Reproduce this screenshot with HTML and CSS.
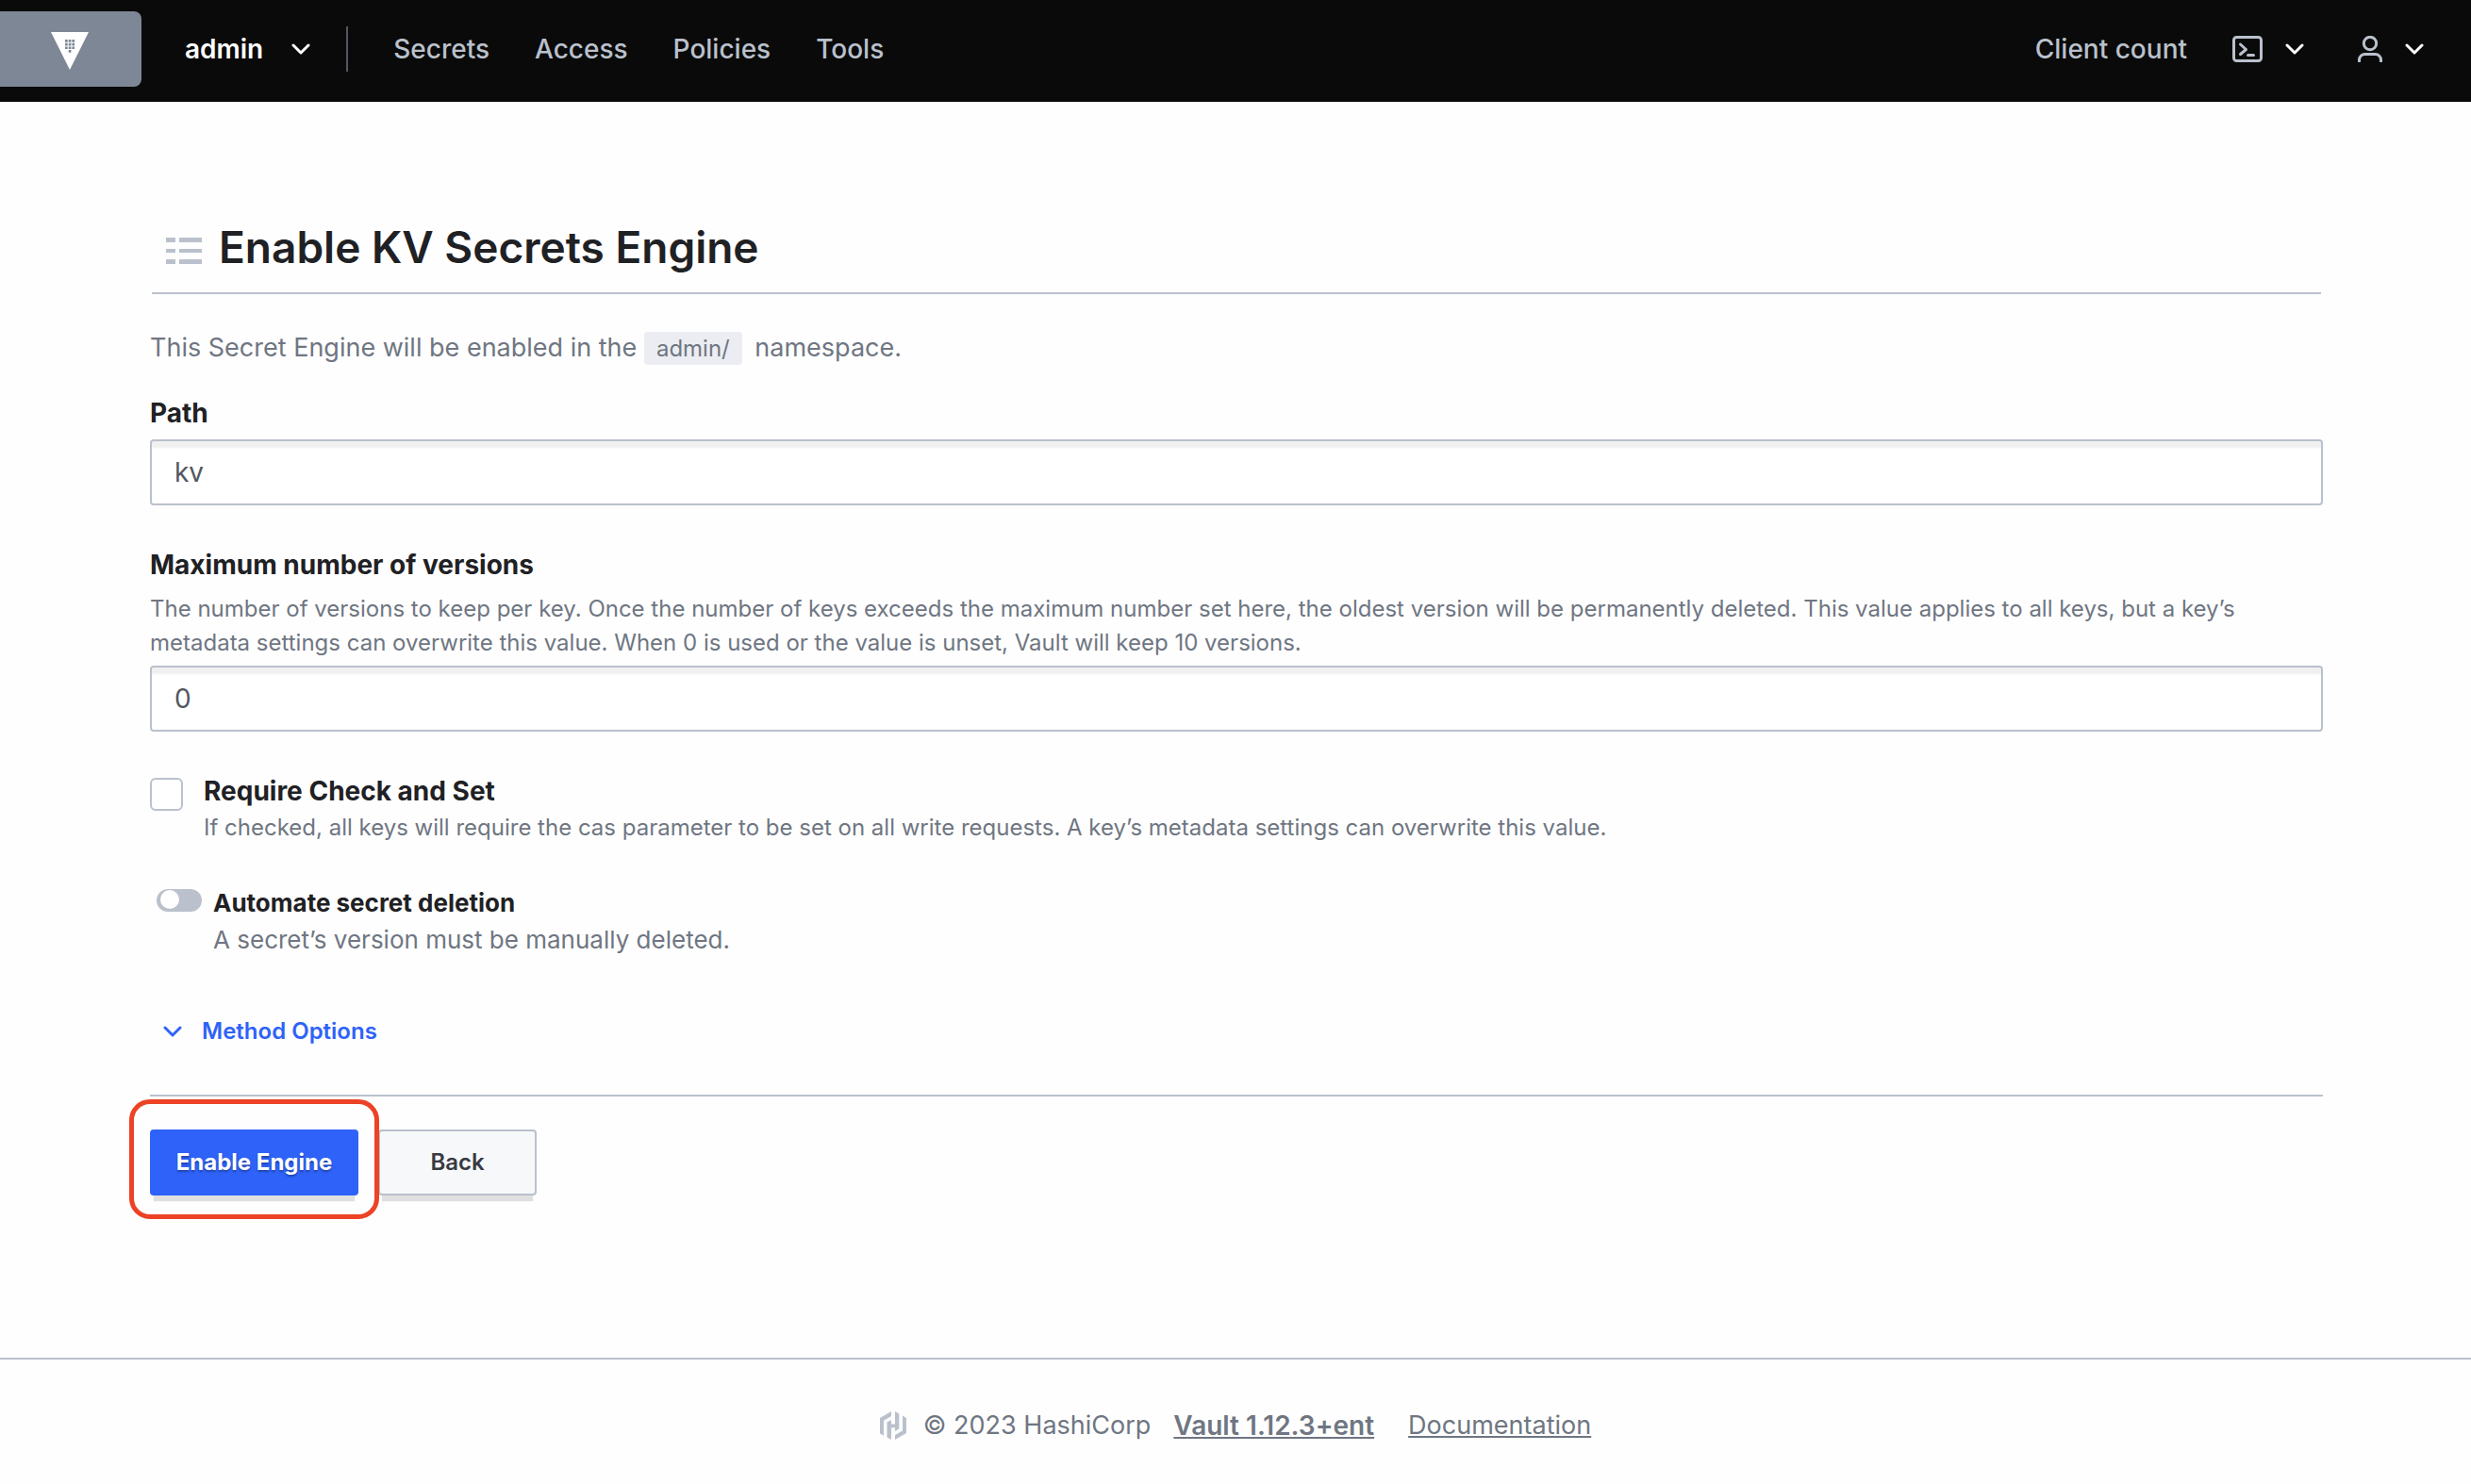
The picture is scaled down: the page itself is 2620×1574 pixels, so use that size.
FILE: index.html
```html
<!DOCTYPE html>
<html lang="en">
<head>
<meta charset="utf-8">
<meta name="viewport" content="width=device-width, initial-scale=1">
<title>Vault</title>
<link rel="stylesheet" href="styles.css">
</head>
<body>
<header class="topbar">
  <a class="brand" href="#" aria-label="Vault home">
    <svg width="40" height="40" viewBox="0 0 40 40"><path fill="#fff" d="M0 0h40L20 40z"/><path fill="#7e8795" d="M15 8h2.700v2.700H15zm3.700 0h2.700v2.700h-2.700zm3.700 0h2.700v2.700h-2.700zM15 11.700h2.700v2.700H15zm3.700 0h2.700v2.700h-2.700zm3.700 0h2.700v2.700h-2.700zM15 15.400h2.700v2.700H15zm3.700 0h2.700v2.700h-2.700zm3.700 0h2.700v2.700h-2.700zM18.700 19h2.700v2.700h-2.700z"/></svg>
  </a>
  <button class="namespace" type="button">admin
    <svg class="chevron" width="20" height="12" viewBox="0 0 20 12"><path d="M2 2l8 8 8-8"/></svg>
  </button>
  <nav class="links">
    <a href="#">Secrets</a>
    <a href="#">Access</a>
    <a href="#">Policies</a>
    <a href="#">Tools</a>
  </nav>
  <div class="tools">
    <a href="#">Client count</a>
    <button class="icon-button" type="button" aria-label="Console">
      <svg class="glyph" width="32" height="28" viewBox="0 0 32 28"><rect x="1.5" y="1.5" width="29" height="25" rx="3"/><path d="M8.500 9l6 5.500-6 5M16.500 20.500h6"/></svg>
      <svg class="chevron" width="20" height="12" viewBox="0 0 20 12"><path d="M2 2l8 8 8-8"/></svg>
    </button>
    <button class="icon-button" type="button" aria-label="User menu">
      <svg class="glyph" width="26" height="28" viewBox="0 0 26 28"><circle cx="13" cy="8" r="6.700"/><path d="M1.500 27v-1.500a6 6 0 0 1 6-6h11a6 6 0 0 1 6 6V27"/></svg>
      <svg class="chevron" width="20" height="12" viewBox="0 0 20 12"><path d="M2 2l8 8 8-8"/></svg>
    </button>
  </div>
</header>

<main class="page">
  <div class="title">
    <svg width="38" height="28" viewBox="0 0 38 28"><path fill="#bac1cc" d="M0 0h10v5H0zM14 0h24v5H14zM0 12h10v4H0zM14 12h24v4H14zM0 23h10v5H0zM14 23h24v5H14z"/></svg>
    <h1>Enable KV Secrets Engine</h1>
  </div>
  <form>
    <p class="intro">This Secret Engine will be enabled in the <code>admin/</code> namespace.</p>

    <div class="field">
      <label class="label" for="path">Path</label>
      <input class="input" id="path" type="text" value="kv">
    </div>

    <div class="field">
      <label class="label" for="versions">Maximum number of versions</label>
      <p class="help">The number of versions to keep per key. Once the number of keys exceeds the maximum number set here, the oldest version will be permanently deleted. This value applies to all keys, but a key’s metadata settings can overwrite this value. When 0 is used or the value is unset, Vault will keep 10 versions.</p>
      <input class="input" id="versions" type="text" value="0">
    </div>

    <div class="option">
      <input class="checkbox" id="cas" type="checkbox">
      <div>
        <label class="label" for="cas">Require Check and Set</label>
        <p class="help">If checked, all keys will require the cas parameter to be set on all write requests. A key’s metadata settings can overwrite this value.</p>
      </div>
    </div>

    <div class="option toggle-option">
      <input class="toggle" id="automate" type="checkbox" role="switch">
      <div>
        <label class="label small" for="automate">Automate secret deletion</label>
        <p class="help large">A secret’s version must be manually deleted.</p>
      </div>
    </div>

    <button class="more" type="button">
      <svg class="chevron" width="20" height="12" viewBox="0 0 20 12"><path d="M2 2l8 8 8-8"/></svg>
      Method Options
    </button>

    <div class="actions">
      <span class="highlight"><button class="button primary" type="submit">Enable Engine</button></span>
      <button class="button" type="button">Back</button>
    </div>
  </form>
</main>

<footer class="footer">
  <svg width="28" height="30" viewBox="0 0 28 30"><path fill="#bac1cc" d="M0 7l12-7v5L4 9.700v16L0 23.500zM7.500 11.500L12 9v4.500h4V0l4.300 2.400v16.200L16 21v-3.700h-4V30l-4.500-2.500zM24 4.500L28 7v16l-12 7v-5l8-4.500z"/></svg>
  <span class="copyright">© 2023 HashiCorp</span>
  <a class="version" href="#">Vault 1.12.3+ent</a>
  <a href="#">Documentation</a>
</footer>
</body>
</html>
```
FILE: styles.css
```css
* { box-sizing: border-box; }

body {
  display: flex;
  flex-direction: column;
  min-height: 100vh;
  margin: 0;
  background: #fefefe;
  color: #6f7682;
  font: 400 28px/36px Inter, "Liberation Sans", sans-serif;
}

h1, p { margin: 0; }
a { color: inherit; }
svg { display: block; flex: none; }
button { font: inherit; color: inherit; cursor: pointer; }

.chevron {
  fill: none;
  stroke: currentColor;
  stroke-width: 3;
  stroke-linecap: round;
  stroke-linejoin: round;
}

/* Top bar */
.topbar {
  display: flex;
  align-items: center;
  height: 108px;
  padding: 0 50px 4px 0;
  background: #0a0a0a;
  color: #bac1cc;
  font-weight: 500;
}
.topbar a { text-decoration: none; }
.brand {
  display: flex;
  align-items: center;
  width: 150px;
  height: 80px;
  padding: 4px 0 0 54px;
  background: #7e8795;
  border-radius: 0 8px 8px 0;
}
.namespace {
  display: flex;
  align-items: center;
  gap: 30px;
  height: 48px;
  padding: 0 38px 0 46px;
  border: 0;
  border-right: 2px solid #525761;
  background: none;
  color: #fff;
  font-weight: 600;
}
.links { display: flex; gap: 48px; padding-left: 48px; }
.tools { display: flex; align-items: center; gap: 48px; margin-left: auto; }
.icon-button {
  display: flex;
  align-items: center;
  gap: 24px;
  padding: 0;
  border: 0;
  background: none;
}
.icon-button + .icon-button { margin-left: 9px; }
.icon-button .chevron { color: #fff; }
.glyph {
  fill: none;
  stroke: #bac1cc;
  stroke-width: 3;
  stroke-linecap: round;
  stroke-linejoin: round;
}

/* Page */
.page {
  flex: 1;
  padding: 126px 157px 80px 159px;
}
.title {
  display: flex;
  align-items: center;
  gap: 18px;
  margin: 0 2px;
  padding: 0 0 20px 15px;
  border-bottom: 2px solid #bac1cc;
}
h1 { color: #1f2124; font-size: 46px; line-height: 56px; font-weight: 600; }
.title svg { margin-top: 8px; }
.intro { margin: 39px 0 33px; font-size: 27px; }
code {
  margin-right: 6px;
  padding: 3px 13px;
  border-radius: 4px;
  background: #ebedf2;
  font: inherit;
  font-size: 24px;
  line-height: 24px;
}

/* Form */
.field { margin-bottom: 45px; }
.label { display: block; color: #1f2124; font-weight: 700; }
.label.small { font-size: 26px; }
.help { font-size: 24px; }
.help.large { font-size: 26px; }
.field .help { margin: 11px 0 -4px; }
.input {
  display: block;
  width: 100%;
  height: 70px;
  margin-top: 10px;
  padding: 0 24px;
  border: 2px solid #bac1cc;
  border-radius: 4px;
  background: #fff;
  box-shadow: inset 0 8px 2px -1px #f0f0f0;
  color: #525761;
  font: inherit;
}
.option { display: flex; gap: 22px; }
.option .help { margin-top: 3px; }
.checkbox, .toggle { flex: none; appearance: none; margin: 4px 0 0; }
.checkbox {
  width: 35px;
  height: 35px;
  border: 2px solid #bac1cc;
  border-radius: 6px;
  background: #fff;
}
.toggle-option { gap: 12px; margin-top: 44px; padding-left: 7px; }
.toggle {
  width: 48px;
  height: 24px;
  margin-top: 3px;
  padding: 1px 4px;
  border-radius: 12px;
  background: #bac1cc;
}
.toggle::before {
  content: "";
  display: block;
  width: 20px;
  height: 20px;
  border-radius: 50%;
  background: #fff;
}
.more {
  display: flex;
  align-items: center;
  gap: 21px;
  margin: 61px 0 49px;
  padding: 0 0 0 14px;
  border: 0;
  background: none;
  color: #2e62f8;
  font-size: 24px;
  font-weight: 600;
}
.actions {
  display: flex;
  gap: 21px;
  padding-top: 35px;
  border-top: 2px solid #bac1cc;
}
.button {
  height: 70px;
  min-width: 168px;
  padding: 0 24px;
  border: 2px solid #bac1cc;
  border-radius: 4px;
  background: #f7f8fa;
  box-shadow: 0 10px 1px -4px #e0e0e0;
  color: #373a42;
  font-size: 24px;
  font-weight: 600;
}
.primary {
  min-width: 221px;
  border-color: #2e62f8;
  background: #2e62f8;
  color: #fff;
  font-weight: 700;
  text-shadow: 0 2px 2px rgba(0, 0, 0, 0.3);
}
.highlight { position: relative; }
.highlight::after {
  content: "";
  position: absolute;
  inset: -32px -22px -25px;
  border: 5px solid #ec4226;
  border-radius: 22px;
  pointer-events: none;
  z-index: 1;
}

/* Footer */
.footer {
  display: flex;
  align-items: center;
  justify-content: center;
  height: 134px;
  padding-top: 8px;
  border-top: 2px solid #bac1cc;
  font-size: 27px;
}
.copyright { margin: 0 24px 0 18px; }
.version { margin-right: 36px; font-size: 28px; font-weight: 600; }
```
